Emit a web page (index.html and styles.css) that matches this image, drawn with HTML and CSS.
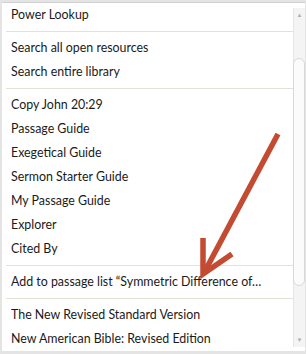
FILE: index.html
```html
<html lang="en">
    <head>
        <meta charset="UTF-8">
        <title>Context menu</title>
        <link rel="stylesheet" href="styles.css">
    </head>
    <body>
      <div class="menu">
        <div class="list">
          <div class="item">Power Lookup</div>
          <div class="sep"></div>
          <div class="item">Search all open resources</div>
          <div class="item">Search entire library</div>
          <div class="sep"></div>
          <div class="item">Copy John 20:29</div>
          <div class="item">Passage Guide</div>
          <div class="item">Exegetical Guide</div>
          <div class="item">Sermon Starter Guide</div>
          <div class="item">My Passage Guide</div>
          <div class="item">Explorer</div>
          <div class="item">Cited By</div>
          <div class="sep"></div>
          <div class="item">Add to passage list “Symmetric Difference of…</div>
          <div class="sep"></div>
          <div class="item">The New Revised Standard Version</div>
          <div class="item">New American Bible: Revised Edition</div>
        </div>
        <div class="scrollbar">
          <span class="arrow">&#9650;</span>
          <div class="track">
            <div class="thumb"></div>
          </div>
          <span class="arrow">&#9660;</span>
        </div>
      </div>
      <!-- annotation drawn over the menu -->
      <svg class="pointer" width="306" height="354" viewBox="0 0 306 354">
        <g stroke="#c24b31" stroke-width="5.5" fill="none">
          <line x1="278" y1="134" x2="205" y2="271" />
          <polyline points="203,238 203,274 232,254" stroke-linejoin="miter" />
        </g>
      </svg>
    </body>
</html>
```

FILE: styles.css
```css
body {
    background: #e4e4e4;
    color: #1a1a1a;
    font-family: Lato, "Noto Sans", sans-serif;
    font-size: 12.4px;
    margin: 0;
    padding: 0;
    width: 306px;
    height: 354px;
    overflow: hidden;
}

.menu {
    display: flex;
    background: #fff;
    height: 349px;
    margin: 2px 1px 0 2px;
    border-top: 1px solid #d2d2d2;
    box-sizing: border-box;
}

.list {
    flex: 1;
}

.item {
    height: 24px;
    line-height: 24px;
    padding-left: 9px;
    white-space: nowrap;
}

.sep {
    height: 1px;
    background: #e3e0d6;
    margin: 4px 0 4px 4px;
}

.scrollbar {
    width: 11px;
    margin: 5px 0 4px 0;
    display: flex;
    flex-direction: column;
    background: #f4f4f4;
    border-left: 1px solid #e6e6e6;
}

.arrow {
    color: #b0b0b0;
    font-size: 6px;
    text-align: center;
    height: 14px;
    line-height: 14px;
}

.track {
    flex: 1;
    padding-top: 36px;
}

.thumb {
    height: 226px;
    background: #fbfbfb;
    border: 1px solid #d8d8d8;
    border-radius: 6px;
    margin-left: -1px;
}

.pointer {
    position: absolute;
    top: 0;
    left: 0;
}
```
